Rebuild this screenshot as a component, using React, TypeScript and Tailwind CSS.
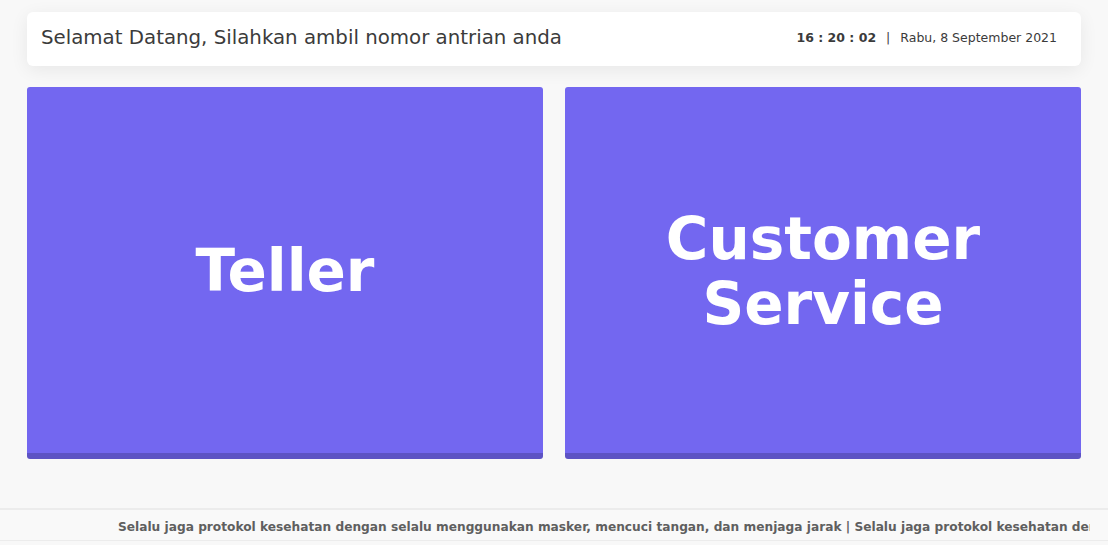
import React from 'react'

const font = { fontFamily: '"DejaVu Sans", "Open Sans", sans-serif' }

const services = [
  { name: 'Teller', lines: ['Teller'] },
  { name: 'Customer Service', lines: ['Customer', 'Service'] },
]

const marquee =
  'Selalu jaga protokol kesehatan dengan selalu menggunakan masker, mencuci tangan, dan menjaga jarak | Selalu jaga protokol kesehatan dengan selalu menggunakan masker, mencuci tangan, dan menjaga jarak'

export default function App() {
  return (
    <div className="w-[1108px] h-[545px] bg-[#f8f8f8] flex flex-col overflow-hidden" style={font}>
      <div className="px-[27px] pt-[12px]">
        {/* header */}
        <div className="h-[54px] bg-white rounded-md shadow-[0_4px_18px_rgba(0,0,0,0.07)] flex items-center justify-between pl-[14px] pr-[24px] pb-[3px]">
          <h1 className="text-[19.8px] text-[#3b3b3b]">
            Selamat Datang, Silahkan ambil nomor antrian anda
          </h1>
          <div className="text-[12.5px] text-[#3b3b3b] flex items-center gap-[10px] pt-[1px]">
            <span className="font-bold">16 : 20 : 02</span>
            <span>|</span>
            <span>Rabu, 8 September 2021</span>
          </div>
        </div>

        {/* queue buttons */}
        <div className="grid grid-cols-2 gap-[22px] mt-[21px]">
          {services.map((s) => (
            <button
              key={s.name}
              className="h-[372px] bg-[#7367f0] border-b-[6px] border-[#5d53c4] rounded-[3px] flex flex-col items-center justify-center text-white font-semibold text-[58px] leading-[65px] pt-[3px]"
            >
              {s.lines.map((l) => (
                <span key={l}>{l}</span>
              ))}
            </button>
          ))}
        </div>
      </div>

      {/* running text */}
      <div className="mt-auto mb-[4px] h-[33px] border-t-2 border-b border-[#ececec] bg-[#f9f9f9] flex items-center overflow-hidden pr-[18px] pt-[4px]">
        <div className="overflow-hidden w-full">
          <p className="whitespace-nowrap pl-[118px] text-[12.2px] font-bold text-[#5f5f5f]">{marquee}</p>
        </div>
      </div>
    </div>
  )
}
